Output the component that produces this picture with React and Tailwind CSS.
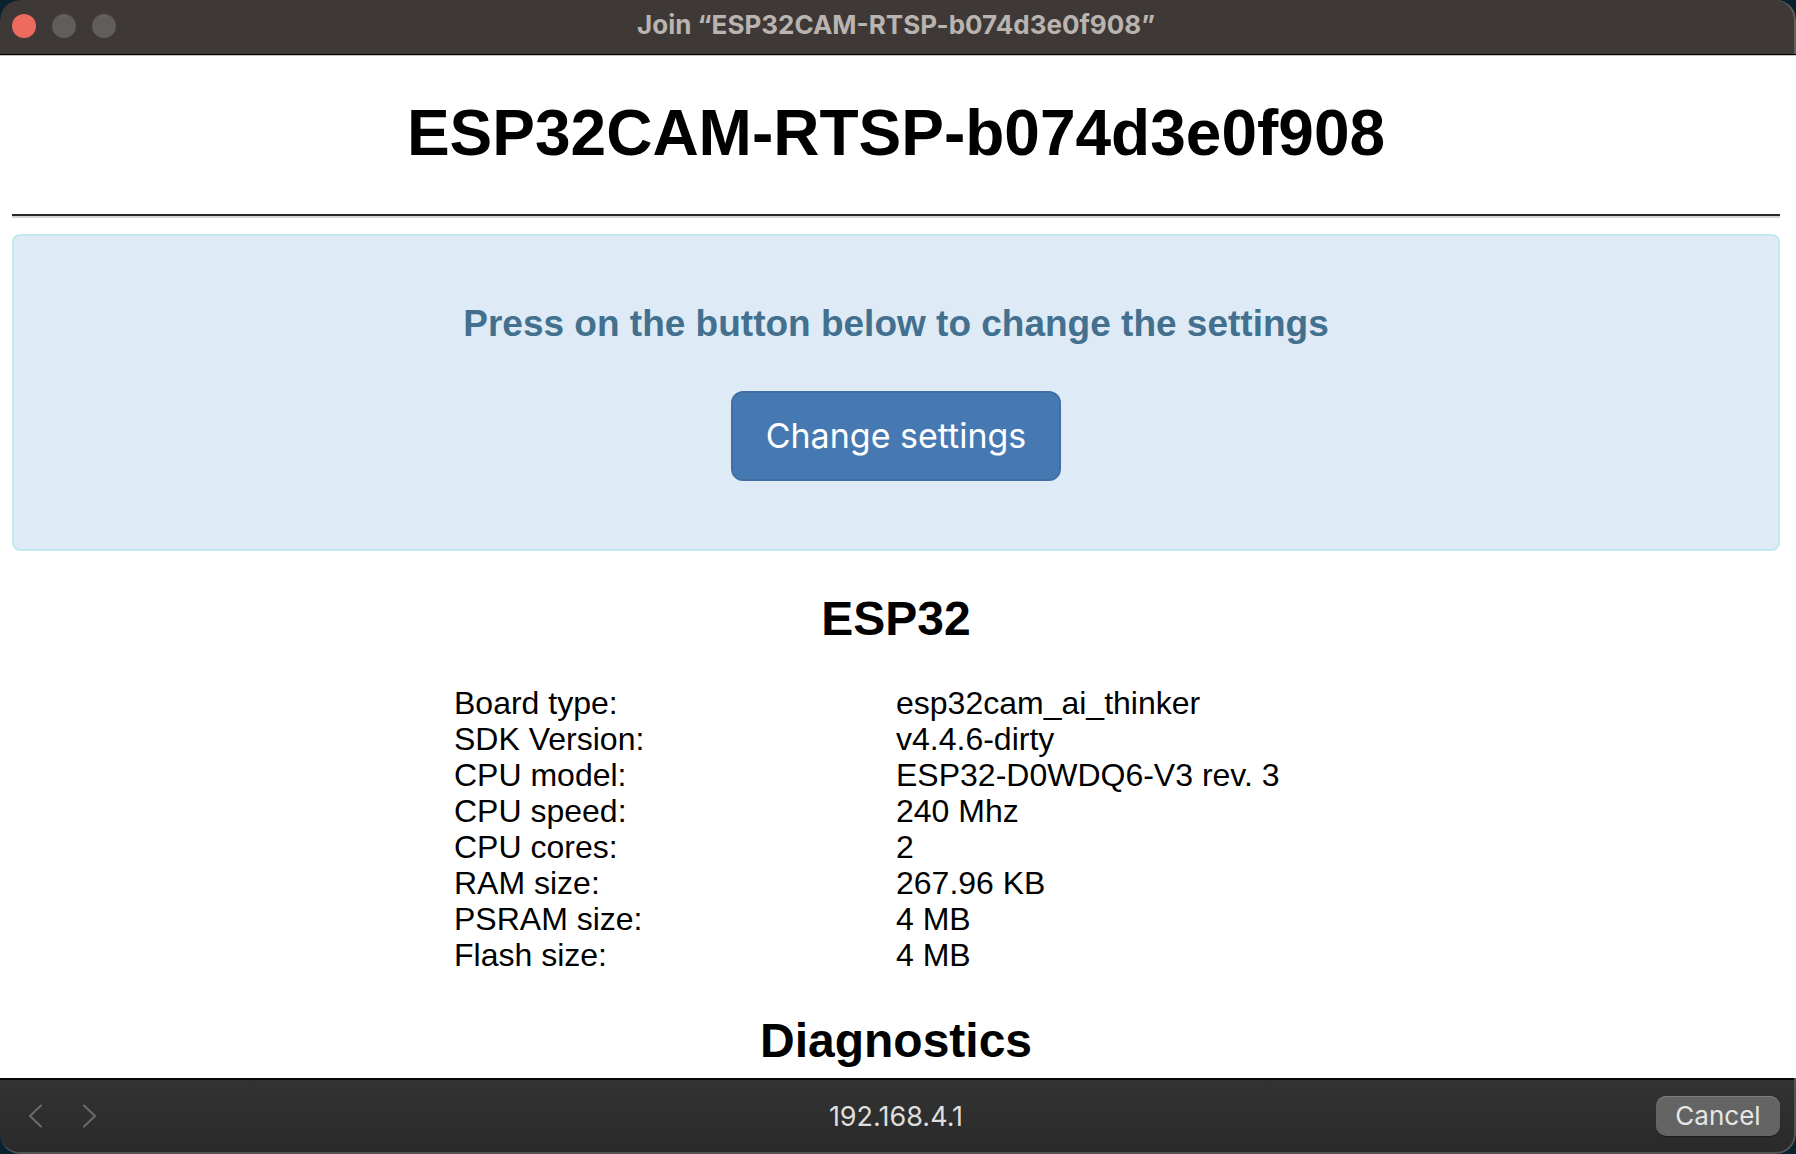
import React from "react";

const board = [
  ["Board type:", "esp32cam_ai_thinker"],
  ["SDK Version:", "v4.4.6-dirty"],
  ["CPU model:", "ESP32-D0WDQ6-V3 rev. 3"],
  ["CPU speed:", "240 Mhz"],
  ["CPU cores:", "2"],
  ["RAM size:", "267.96 KB"],
  ["PSRAM size:", "4 MB"],
  ["Flash size:", "4 MB"],
];

function TitleBar() {
  return (
    <header className="grid h-[56px] shrink-0 grid-cols-[1fr_auto_1fr] items-start rounded-t-[20px] border-b border-[#c4c4c4] bg-[#3e3936] pr-1 shadow-[inset_0_-1px_0_#000,inset_-2px_0_0_#64605e]">
      <div className="flex gap-4 pt-[14px] pl-3">
        <button type="button" aria-label="Close" className="size-6 rounded-full bg-[#ed6a5f]" />
        <button type="button" aria-label="Minimize" className="size-6 rounded-full bg-[#615d5b]" />
        <button type="button" aria-label="Zoom" className="size-6 rounded-full bg-[#615d5b]" />
      </div>
      <p className="pt-2 font-['Inter',sans-serif] text-[26px] leading-[34px] font-bold whitespace-nowrap text-[#b9b4b0]">
        Join “ESP32CAM-RTSP-b074d3e0f908”
      </p>
    </header>
  );
}

function Chevron({ d }) {
  return (
    <svg viewBox="0 0 14 24" className="h-6 w-[14px]" fill="none" stroke="#6b6b6b" strokeWidth="2" strokeLinecap="round" strokeLinejoin="round" aria-hidden="true">
      <path d={d} />
    </svg>
  );
}

function BottomBar() {
  return (
    <footer className="h-[76px] shrink-0 rounded-b-[20px] border-r-2 border-b-2 border-[#555353] bg-linear-to-b from-[#333333] to-[#2a2a2a]">
      <div className="grid h-full grid-cols-[1fr_auto_1fr] items-center border-t-2 border-[#050606] pr-[14px] pl-3">
        <div className="flex gap-[41px] pl-4">
          <button type="button" aria-label="Back">
            <Chevron d="M13 1.5 2 12l11 10.5" />
          </button>
          <button type="button" aria-label="Forward">
            <Chevron d="M1 1.5 12 12 1 22.5" />
          </button>
        </div>
        <p className="pt-[2px] font-['Inter',sans-serif] text-[27px] leading-8 text-[#dededd]">192.168.4.1</p>
        <button type="button" className="h-10 w-[124px] justify-self-end rounded-[10px] bg-[#646464] font-['Inter',sans-serif] text-[26px] leading-8 text-[#e6e6e6] shadow-[inset_0_1px_0_#7d7d7d,0_1px_1px_#1c1c1c]">
          Cancel
        </button>
      </div>
    </footer>
  );
}

export default function App() {
  return (
    <div className="h-screen bg-[#0a2230]">
      <div className="flex h-full flex-col overflow-hidden rounded-[20px] font-['Liberation_Sans',Arial,sans-serif] text-black">
        <TitleBar />
        <main className="min-h-0 flex-1 overflow-hidden bg-white pt-[41px] pr-4 pl-3">
          <h1 className="text-center text-[64px] leading-[72px] font-bold">ESP32CAM-RTSP-b074d3e0f908</h1>
          <hr className="mt-[45px] border-t-2 border-b-2 border-t-[#2a282a] border-b-[#d5d3d5]" />
          <section className="mt-4 flex flex-col items-center rounded-lg border-2 border-[#c4e8ef] bg-[#deebf6] pt-[66px] pb-[68px]">
            <h3 className="text-center text-[37px] leading-[44px] font-bold text-[#42708e]">
              Press on the button below to change the settings
            </h3>
            <button type="button" className="mt-[45px] h-[90px] rounded-xl border-2 border-[#416fa6] bg-[#4679b2] px-[33px] font-['Inter',sans-serif] text-[34px] leading-[44px] text-white">
              Change settings
            </button>
          </section>
          <h2 className="mt-10 text-center text-[48px] leading-[56px] font-bold">ESP32</h2>
          <table className="mx-auto mt-[38px] w-1/2 table-fixed border-collapse text-left text-[32px] leading-9">
            <tbody>
              {board.map(([label, value]) => (
                <tr key={label}>
                  <th scope="row" className="p-0 font-normal">{label}</th>
                  <td className="p-0 whitespace-nowrap">{value}</td>
                </tr>
              ))}
            </tbody>
          </table>
          <h2 className="mt-10 text-center text-[48px] leading-[56px] font-bold">Diagnostics</h2>
        </main>
        <BottomBar />
      </div>
    </div>
  );
}
